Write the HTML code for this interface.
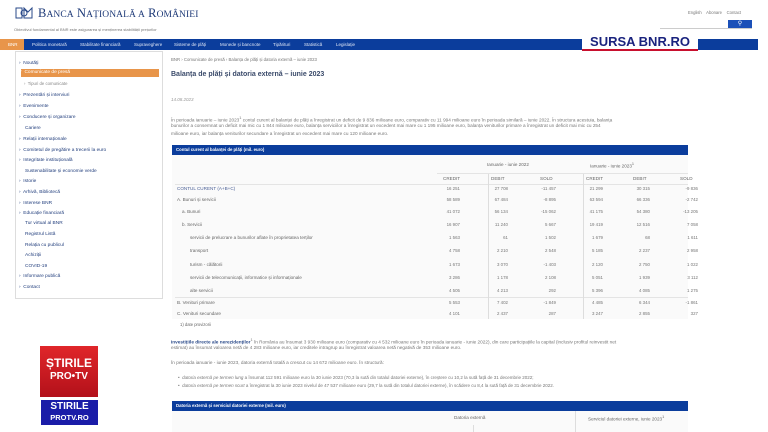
<!DOCTYPE html>
<html><head><meta charset="utf-8"><style>
*{margin:0;padding:0;box-sizing:border-box}
body{width:768px;height:432px;overflow:hidden;background:#fff;font-family:"Liberation Sans",sans-serif;position:relative;color:#555}
.a{position:absolute;white-space:nowrap}
.nav{position:absolute;left:0;top:39px;width:758px;height:11px;background:#0b3d9c}
.nav span{position:absolute;top:2.5px;font-size:4.5px;color:#dfe6f5}
.sb{position:absolute;left:15px;top:51px;width:148px;height:248px;border:1px solid #ddd;background:#fff}
.si{position:absolute;left:19px;font-size:4.8px;color:#24407e}
.tb{position:absolute;left:172px;width:516px;height:10px;background:#0b3d9c}
.r{position:absolute;font-size:4.6px;color:#666}
.n{position:absolute;font-size:4.4px;color:#777;text-align:right;width:30px}
.ln{position:absolute;height:1px;background:#e4e4e4}
.p{position:absolute;white-space:nowrap;font-size:4.7px;color:#777}
</style></head><body>
<svg class="a" style="left:14px;top:5px" width="20" height="16" viewBox="0 0 20 16"><g fill="none" stroke="#2a4a8a" stroke-width="1"><path d="M2 3h6v10H2zM10 3l4 4 4-4v10h-8z"/><circle cx="10" cy="8" r="3"/></g></svg>
<div class="a" style="left:38px;top:6px;font-family:'Liberation Serif',serif;font-size:12.5px;color:#1e3a78;letter-spacing:0.1px">B<span style="font-size:9.5px">ANCA</span> N<span style="font-size:9.5px">AȚIONALĂ A</span> R<span style="font-size:9.5px">OMÂNIEI</span></div>
<div class="a" style="left:14px;top:27px;font-size:4px;color:#777">Obiectivul fundamental al BNR este asigurarea și menținerea stabilității prețurilor</div>
<div class="a" style="left:688px;top:10px;font-size:4.2px;color:#777">English &nbsp;&nbsp; Abonare &nbsp;&nbsp; Contact</div>
<div class="a" style="left:660px;top:28px;width:92px;height:1px;background:#ccc"></div>
<div class="a" style="left:728px;top:20px;width:24px;height:8px;background:#1b50b8;color:#fff;font-size:6px;text-align:center;line-height:8px">⚲</div>
<div class="nav">
<span style="left:0;top:0;width:24px;height:11px;background:#e8954a;color:#fff;padding:2.5px 0 0 8px">BNR</span>
<span style="left:32px">Politica monetară</span><span style="left:80px">Stabilitate financiară</span><span style="left:134px">Supraveghere</span><span style="left:174px">Sisteme de plăți</span><span style="left:220px">Monede și bancnote</span><span style="left:273px">Tipărituri</span><span style="left:304px">Statistică</span><span style="left:336px">Legislație</span>
</div>
<div class="a" style="left:582px;top:33px;width:116px;height:18px;background:#fff;border-bottom:2px solid #c8102e;font-weight:bold;font-size:13px;color:#1a237e;text-align:center;line-height:17px">SURSA BNR.RO</div>
<div class="sb"></div>
<div class="a" style="left:21px;top:69px;width:138px;height:8px;background:#e8954a"></div>
<div class="si" style="top:61px">›&nbsp; Noutăți</div>
<div class="si" style="top:70px;color:#fff">˅&nbsp; Comunicate de presă</div>
<div class="si" style="top:81px;left:24px;font-size:4.3px;color:#888">›&nbsp; Tipuri de comunicate</div>
<div class="si" style="top:93px">›&nbsp; Prezentări și interviuri</div>
<div class="si" style="top:104px">›&nbsp; Evenimente</div>
<div class="si" style="top:115px">›&nbsp; Conducere și organizare</div>
<div class="si" style="top:126px;left:25px">Cariere</div>
<div class="si" style="top:137px">›&nbsp; Relații internaționale</div>
<div class="si" style="top:148px">›&nbsp; Comitetul de pregătire a trecerii la euro</div>
<div class="si" style="top:158px">›&nbsp; Integritate instituțională</div>
<div class="si" style="top:169px;left:25px">Sustenabilitate și economie verde</div>
<div class="si" style="top:179px">›&nbsp; Istorie</div>
<div class="si" style="top:190px">›&nbsp; Arhivă, Bibliotecă</div>
<div class="si" style="top:201px">›&nbsp; Interese BNR</div>
<div class="si" style="top:211px">›&nbsp; Educație financiară</div>
<div class="si" style="top:221px;left:25px">Tur virtual al BNR</div>
<div class="si" style="top:232px;left:25px">Registrul Listă</div>
<div class="si" style="top:243px;left:25px">Relația cu publicul</div>
<div class="si" style="top:253px;left:25px">Achiziții</div>
<div class="si" style="top:264px;left:25px">COVID-19</div>
<div class="si" style="top:274px">›&nbsp; Informare publică</div>
<div class="si" style="top:285px">›&nbsp; Contact</div>

<div class="a" style="left:171px;top:57px;font-size:4.3px;color:#777">BNR › Comunicate de presă › Balanța de plăți și datoria externă – iunie 2023</div>
<div class="a" style="left:171px;top:71px;font-size:7px;font-weight:bold;color:#3a4a6a">Balanța de plăți și datoria externă – iunie 2023</div>
<div class="a" style="left:171px;top:97px;font-size:4.5px;color:#999;font-style:italic">14.08.2023</div>
<div class="p" style="left:171px;top:115px">În perioada ianuarie – iunie 2023<sup>1</sup> contul curent al balanței de plăți a înregistrat un deficit de 9 836 milioane euro, comparativ cu 11 994 milioane euro în perioada similară – iunie 2022. În structura acestuia, balanța</div>
<div class="p" style="left:171px;top:123px">bunurilor a consemnat un deficit mai mic cu 1 844 milioane euro, balanța serviciilor a înregistrat un excedent mai mare cu 1 195 milioane euro, balanța veniturilor primare a înregistrat un deficit mai mic cu 254</div>
<div class="p" style="left:171px;top:131px">milioane euro, iar balanța veniturilor secundare a înregistrat un excedent mai mare cu 120 milioane euro.</div>

<div class="tb" style="top:145px"></div>
<div class="a" style="left:176px;top:147px;font-size:4.3px;color:#fff;font-weight:bold">Contul curent al balanței de plăți (mil. euro)</div>
<div class="a" style="left:172px;top:155px;width:516px;height:164px;background:#fafafa"></div>
<div class="r" style="left:487px;top:162px">Ianuarie - iunie 2022</div>
<div class="r" style="left:590px;top:162px">Ianuarie - iunie 2023<sup>1</sup></div>
<div class="ln" style="left:437px;top:173px;width:251px"></div>
<div class="ln" style="left:175px;top:184px;width:513px"></div>
<div class="ln" style="left:175px;top:297px;width:513px"></div>
<div class="a" style="left:488px;top:174px;width:1px;height:145px;background:#ddd"></div>
<div class="a" style="left:583px;top:174px;width:1px;height:145px;background:#ddd"></div>
<div class="r" style="left:443px;top:176px">CREDIT</div><div class="r" style="left:491px;top:176px">DEBIT</div><div class="r" style="left:540px;top:176px">SOLD</div><div class="r" style="left:586px;top:176px">CREDIT</div><div class="r" style="left:633px;top:176px">DEBIT</div><div class="r" style="left:680px;top:176px">SOLD</div>

<div class="r" style="left:177px;top:186px;color:#4a5f96">CONTUL CURENT (A+B+C)</div>
<div class="r" style="left:177px;top:197px">A. Bunuri și servicii</div>
<div class="r" style="left:182px;top:209px">a. Bunuri</div>
<div class="r" style="left:182px;top:222px">b. Servicii</div>
<div class="r" style="left:190px;top:235px">servicii de prelucrare a bunurilor aflate în proprietatea terților</div>
<div class="r" style="left:190px;top:248px">transport</div>
<div class="r" style="left:190px;top:262px">turism - călătorii</div>
<div class="r" style="left:190px;top:275px">servicii de telecomunicații, informatice și informaționale</div>
<div class="r" style="left:190px;top:288px">alte servicii</div>
<div class="r" style="left:177px;top:300px">B. Venituri primare</div>
<div class="r" style="left:177px;top:311px">C. Venituri secundare</div>
<div class="r" style="left:180px;top:322px;font-size:4.2px">1) date provizorii</div>

<div class="p" style="left:171px;top:337px"><b style="color:#2a4a8a">Investițiile directe ale nerezidenților</b><sup>1</sup> în România au însumat 3 930 milioane euro (comparativ cu 4 532 milioane euro în perioada ianuarie - iunie 2022), din care participațiile la capital (inclusiv profitul reinvestit net</div>
<div class="p" style="left:171px;top:345px">estimat) au însumat valoarea netă de 4 283 milioane euro, iar creditele intragrup au înregistrat valoarea netă negativă de 353 milioane euro.</div>
<div class="p" style="left:171px;top:360px">În perioada ianuarie - iunie 2023, datoria externă totală a crescut cu 14 672 milioane euro. În structură:</div>
<div class="p" style="left:178px;top:375px;font-size:4.5px"><i>•&nbsp; datoria externă pe termen lung</i> a însumat 112 591 milioane euro la 30 iunie 2023 (70,3 la sută din totalul datoriei externe), în creștere cu 10,2 la sută față de 31 decembrie 2022;</div>
<div class="p" style="left:178px;top:383px;font-size:4.5px"><i>•&nbsp; datoria externă pe termen scurt</i> a înregistrat la 30 iunie 2023 nivelul de 47 537 milioane euro (29,7 la sută din totalul datoriei externe), în scădere cu 8,4 la sută față de 31 decembrie 2022.</div>
<div class="tb" style="top:401px"></div>
<div class="a" style="left:176px;top:403px;font-size:4.3px;color:#fff;font-weight:bold">Datoria externă și serviciul datoriei externe (mil. euro)</div>
<div class="a" style="left:172px;top:411px;width:516px;height:21px;background:#fafafa"></div>
<div class="a" style="left:575px;top:411px;width:1px;height:21px;background:#ddd"></div>
<div class="a" style="left:473px;top:425px;width:1px;height:7px;background:#ddd"></div>
<div class="r" style="left:454px;top:415px">Datoria externă</div>
<div class="r" style="left:588px;top:415px">Serviciul datoriei externe, iunie 2023<sup>1</sup></div>

<div class="a" style="left:40px;top:346px;width:58px;height:51px;background:linear-gradient(#e0262a,#b3111a)"></div>
<div class="a" style="left:40px;top:357px;width:58px;text-align:center;color:#fff;font-weight:bold;font-size:12px;line-height:12px">ȘTIRILE</div>
<div class="a" style="left:40px;top:372px;width:58px;text-align:center;color:#fff;font-weight:bold;font-size:10px;line-height:10px">PRO•TV</div>
<div class="a" style="left:41px;top:400px;width:57px;height:25px;background:#1a1ca8"></div>
<div class="a" style="left:41px;top:401px;width:57px;text-align:center;color:#fff;font-weight:bold;font-size:10px;line-height:11px">STIRILE</div>
<div class="a" style="left:41px;top:413px;width:57px;text-align:center;color:#fff;font-weight:bold;font-size:7.5px;line-height:9px">PROTV.RO</div>

<div style="position:absolute;left:0;top:0">
<div class="n" style="left:430px;top:186px">16 251</div><div class="n" style="left:478px;top:186px">27 708</div><div class="n" style="left:526px;top:186px">-11 457</div><div class="n" style="left:573px;top:186px">21 299</div><div class="n" style="left:620px;top:186px">30 315</div><div class="n" style="left:668px;top:186px">-9 836</div>
<div class="n" style="left:430px;top:197px">58 589</div><div class="n" style="left:478px;top:197px">67 484</div><div class="n" style="left:526px;top:197px">-8 895</div><div class="n" style="left:573px;top:197px">63 594</div><div class="n" style="left:620px;top:197px">66 336</div><div class="n" style="left:668px;top:197px">-2 742</div>
<div class="n" style="left:430px;top:209px">41 072</div><div class="n" style="left:478px;top:209px">56 134</div><div class="n" style="left:526px;top:209px">-15 062</div><div class="n" style="left:573px;top:209px">41 175</div><div class="n" style="left:620px;top:209px">54 380</div><div class="n" style="left:668px;top:209px">-13 205</div>
<div class="n" style="left:430px;top:222px">16 907</div><div class="n" style="left:478px;top:222px">11 240</div><div class="n" style="left:526px;top:222px">5 667</div><div class="n" style="left:573px;top:222px">19 419</div><div class="n" style="left:620px;top:222px">12 516</div><div class="n" style="left:668px;top:222px">7 058</div>
<div class="n" style="left:430px;top:235px">1 563</div><div class="n" style="left:478px;top:235px">61</div><div class="n" style="left:526px;top:235px">1 502</div><div class="n" style="left:573px;top:235px">1 679</div><div class="n" style="left:620px;top:235px">68</div><div class="n" style="left:668px;top:235px">1 611</div>
<div class="n" style="left:430px;top:248px">4 758</div><div class="n" style="left:478px;top:248px">2 210</div><div class="n" style="left:526px;top:248px">2 548</div><div class="n" style="left:573px;top:248px">5 185</div><div class="n" style="left:620px;top:248px">2 237</div><div class="n" style="left:668px;top:248px">2 958</div>
<div class="n" style="left:430px;top:262px">1 673</div><div class="n" style="left:478px;top:262px">3 070</div><div class="n" style="left:526px;top:262px">-1 403</div><div class="n" style="left:573px;top:262px">2 120</div><div class="n" style="left:620px;top:262px">2 750</div><div class="n" style="left:668px;top:262px">1 022</div>
<div class="n" style="left:430px;top:275px">3 286</div><div class="n" style="left:478px;top:275px">1 178</div><div class="n" style="left:526px;top:275px">2 108</div><div class="n" style="left:573px;top:275px">5 051</div><div class="n" style="left:620px;top:275px">1 939</div><div class="n" style="left:668px;top:275px">3 112</div>
<div class="n" style="left:430px;top:288px">4 505</div><div class="n" style="left:478px;top:288px">4 213</div><div class="n" style="left:526px;top:288px">292</div><div class="n" style="left:573px;top:288px">5 396</div><div class="n" style="left:620px;top:288px">4 085</div><div class="n" style="left:668px;top:288px">1 275</div>
<div class="n" style="left:430px;top:300px">5 553</div><div class="n" style="left:478px;top:300px">7 402</div><div class="n" style="left:526px;top:300px">-1 849</div><div class="n" style="left:573px;top:300px">4 485</div><div class="n" style="left:620px;top:300px">6 344</div><div class="n" style="left:668px;top:300px">-1 861</div>
<div class="n" style="left:430px;top:311px">4 101</div><div class="n" style="left:478px;top:311px">2 437</div><div class="n" style="left:526px;top:311px">287</div><div class="n" style="left:573px;top:311px">3 247</div><div class="n" style="left:620px;top:311px">2 855</div><div class="n" style="left:668px;top:311px">327</div>
</div>
</body></html>
